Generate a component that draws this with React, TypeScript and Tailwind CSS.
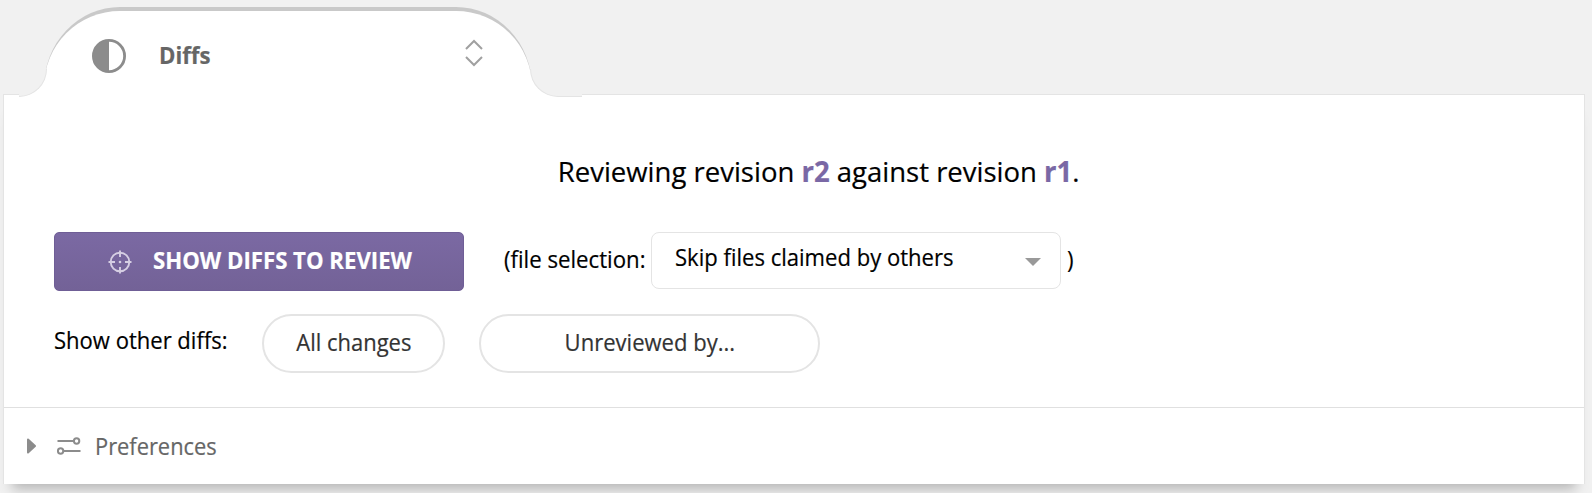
import React from "react";

function ContrastIcon() {
  return (
    <svg width="34" height="34" viewBox="0 0 34 34" className="shrink-0">
      <circle cx="17" cy="17" r="15.6" fill="none" stroke="#8c8c8c" strokeWidth="2.8" />
      <path d="M17 1A16 16 0 0 0 17 33Z" fill="#8c8c8c" />
    </svg>
  );
}

function UpDownIcon() {
  return (
    <svg width="18" height="28" viewBox="0 0 18 28" className="shrink-0" fill="none" stroke="#a0a0a0" strokeWidth="2">
      <path d="M1 10L9 2L17 10M1 18L9 26L17 18" />
    </svg>
  );
}

function TargetIcon() {
  return (
    <svg width="24" height="24" viewBox="0 0 24 24" className="shrink-0" fill="none" stroke="#d5cee3" strokeWidth="1.9">
      <circle cx="12" cy="12" r="9.3" />
      <path d="M12 0.5V7M12 17V23.5M0.5 12H7M17 12H23.5" />
      <circle cx="12" cy="12" r="1.3" fill="#d5cee3" stroke="none" />
    </svg>
  );
}

function SlidersIcon() {
  return (
    <svg width="24" height="18" viewBox="0 0 24 18" className="shrink-0" fill="none" stroke="#8c8c8c" strokeWidth="2">
      <path d="M0.5 4H16.5M7 14H23.5" />
      <circle cx="19.6" cy="4" r="2.7" />
      <circle cx="3.6" cy="14" r="2.7" />
    </svg>
  );
}

export default function App() {
  return (
    <div className="h-[493px] w-[1592px] overflow-hidden bg-[#f1f1f1] font-['Open_Sans','Noto_Sans',sans-serif] text-2xl text-black [-webkit-text-stroke:0.2px]">
      <header className="flex h-[94px] pt-[7px] pl-[44px]">
        <div className="relative z-10 flex h-[90px] w-[488px] items-start rounded-t-[76px_80px] border-t-4 border-[#c9c9c9] bg-white">
          <div className="flex h-[86px] w-full items-start pt-7 pr-[49px] pl-12">
            <ContrastIcon />
            <span className="ml-[33px] origin-left scale-x-[0.925] leading-[32px] font-bold whitespace-nowrap text-[#666]">Diffs</span>
            <div className="ml-auto">
              <UpDownIcon />
            </div>
          </div>
          <i className="absolute top-[58px] -left-[25px] block h-7 w-7 bg-white">
            <i className="block h-full w-full rounded-br-[28px] border-r border-b border-[#e4e4e4] bg-[#f1f1f1]" />
          </i>
          <i className="absolute top-[58px] left-[486px] block h-7 w-[52px] bg-white">
            <i className="block h-full w-full rounded-bl-[28px] border-b border-l border-[#e4e4e4] bg-[#f1f1f1]" />
          </i>
        </div>
      </header>
      <main className="ml-[3px] h-[390px] w-[1582px] border border-b-0 border-[#e4e4e4] bg-white shadow-[0_14px_12px_-9px_rgba(0,0,0,0.25)]">
        <section className="h-[312px] pt-[54px] pl-[50px]">
          <h1 className="flex h-[44px] w-[1529px] items-center justify-center text-[28px] leading-[44px] whitespace-nowrap">
            <span className="scale-x-[0.982] whitespace-pre">
              Reviewing revision <b className="text-[#7a68a5]">r2</b> against revision <b className="text-[#7a68a5]">r1</b>.
            </span>
          </h1>
          <div className="mt-[39px] flex h-[59px]">
            <button className="flex h-[59px] w-[410px] shrink-0 items-center rounded-[5px] border border-[#6f5e96] bg-linear-to-b from-[#7b69a3] to-[#736297] pl-[53px] text-white">
              <TargetIcon />
              <span className="-mt-1 ml-[21px] origin-left scale-x-[0.924] font-bold whitespace-nowrap">SHOW DIFFS TO REVIEW</span>
            </button>
            <span className="mr-[-7px] ml-10 w-[154px] shrink-0 origin-left scale-x-[0.925] leading-[53px] whitespace-nowrap">(file selection:</span>
            <div className="flex h-[57px] w-[410px] shrink-0 items-center rounded-[8px] border border-[#e4e4e4] pr-[19px] pb-[7px] pl-[23px]">
              <span className="origin-left scale-x-[0.919] whitespace-nowrap">Skip files claimed by others</span>
              <svg width="16" height="8" viewBox="0 0 16 8" className="mt-2.5 ml-auto shrink-0">
                <path d="M0 0H16L8 8Z" fill="#999" />
              </svg>
            </div>
            <span className="ml-[6px] origin-left scale-x-[0.92] leading-[53px]">)</span>
          </div>
          <div className="mt-[23px] flex h-[59px]">
            <span className="w-[208px] shrink-0 origin-left scale-x-[0.918] leading-[52px] whitespace-nowrap">Show other diffs:</span>
            <button className="flex h-[59px] w-[183px] shrink-0 items-center justify-center rounded-full border-2 border-[#e4e4e4] pb-1 text-[#333]">
              <span className="scale-x-[0.915] whitespace-nowrap">All changes</span>
            </button>
            <button className="ml-[34px] flex h-[59px] w-[341px] shrink-0 items-center justify-center rounded-full border-2 border-[#e4e4e4] pb-1 text-[#333]">
              <span className="scale-x-[0.918] whitespace-nowrap">Unreviewed by...</span>
            </button>
          </div>
        </section>
        <section className="flex h-[77px] items-center border-t border-[#e0e0e0] pl-[23px] text-[#666]">
          <svg width="9" height="16" viewBox="0 0 9 16" className="shrink-0">
            <path d="M1 1.5L8 8L1 14.5Z" fill="#8c8c8c" stroke="#8c8c8c" strokeWidth="2" strokeLinejoin="round" />
          </svg>
          <span className="ml-[21px]">
            <SlidersIcon />
          </span>
          <span className="ml-[14px] origin-left scale-x-[0.91] whitespace-nowrap">Preferences</span>
        </section>
      </main>
    </div>
  );
}
